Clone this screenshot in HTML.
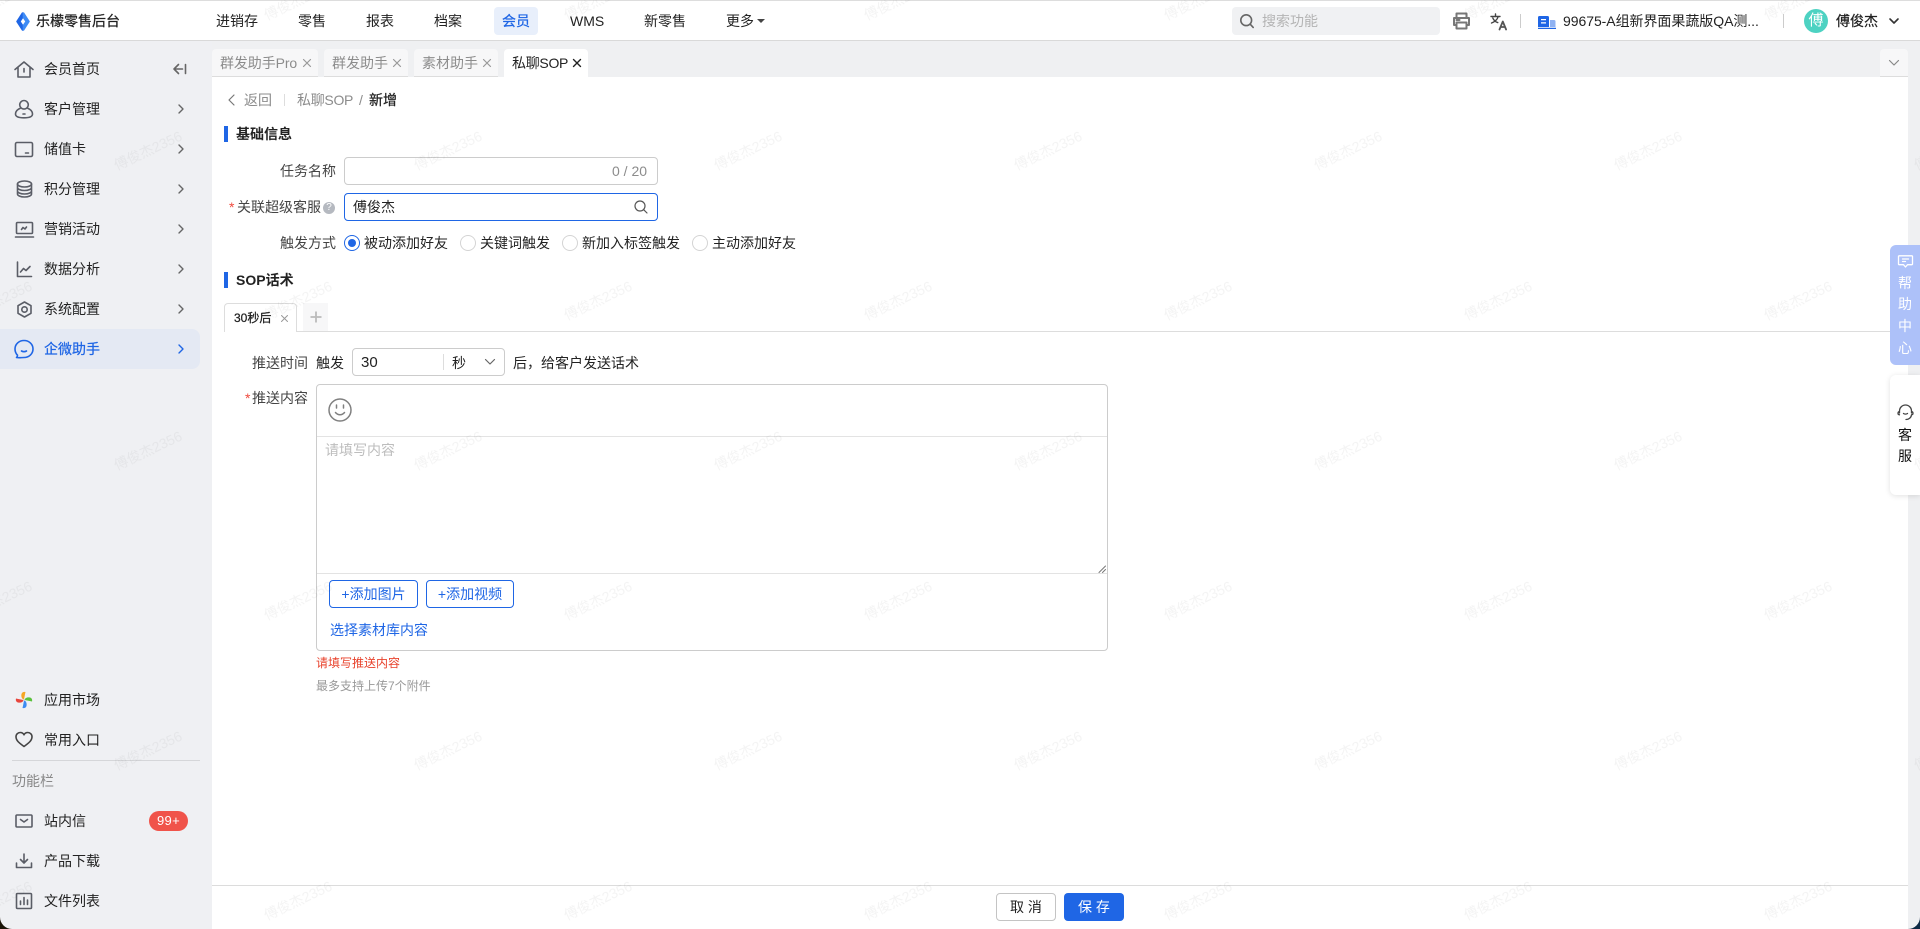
<!DOCTYPE html>
<html lang="zh-CN">
<head>
<meta charset="utf-8">
<title>私聊SOP</title>
<style>
html,body{margin:0;padding:0;width:1920px;height:929px;overflow:hidden;background:#fff}
body{position:relative;font-family:"Liberation Sans","Noto Sans CJK SC",sans-serif;font-size:14px;color:#222}
.a,.t,svg.i{position:absolute}
.t{white-space:nowrap;line-height:20px;height:20px}
.s{font-size:12px}
.g{color:#8c8c8c}
.b{color:#1f66e5}
.m{-webkit-text-stroke:.25px currentColor}
.bd{font-weight:700}
.tab{position:absolute;top:49px;height:27px;background:#f7f7f8;border-bottom:1px solid #ddd;border-radius:4px 4px 0 0}
.inp{position:absolute;box-sizing:border-box;background:#fff;border:1px solid #ccc;border-radius:4px}
.radio{position:absolute;box-sizing:border-box;width:16px;height:16px;top:235px;border:1px solid #d4d4d4;border-radius:50%;background:#fff}
.btn{position:absolute;box-sizing:border-box;top:580px;height:28px;border:1px solid #1f66e5;border-radius:4px;color:#1f66e5;line-height:26px;text-align:center;background:#fff}
svg.i{fill:none;stroke:#5a5d66;stroke-width:1.6;stroke-linecap:round;stroke-linejoin:round;overflow:visible}
svg.c{stroke:#666;stroke-width:1.4}
</style>
</head>
<body>
<!-- window corners -->
<div class="a" style="left:0;top:915px;width:14px;height:14px;background:#1b1408"></div>
<div class="a" style="left:1906px;top:915px;width:14px;height:14px;background:#0e2a45"></div>

<!-- backgrounds -->
<div class="a" style="left:0;top:0;width:1920px;height:41px;background:#fff;border-top:1px solid #ddd;box-sizing:border-box;border-bottom:1px solid #d9d9d9"></div>
<div class="a" style="left:0;top:41px;width:212px;height:888px;background:#eff0f3;border-bottom-left-radius:12px"></div>
<div class="a" style="left:212px;top:41px;width:1708px;height:36px;background:#eff0f2"></div>
<div class="a" style="left:1908px;top:41px;width:12px;height:888px;background:#eff0f2;border-bottom-right-radius:12px"></div>
<div class="a" style="left:212px;top:77px;width:1696px;height:852px;background:#fff"></div>

<!-- top bar -->
<svg class="i" style="left:16px;top:12px;stroke:none" width="14" height="19" viewBox="0 0 14 19"><path fill="#1f66e5" stroke="#1f66e5" d="M6.500 1L1 9.500 6.500 18V13.500L3.800 9.500 6.500 5.500z"/><path fill="#3f8cf5" stroke="#3f8cf5" d="M7.500 1L13 9.500 7.500 18V13.500L10.200 9.500 7.500 5.500z"/></svg>
<div class="t m" style="left:36px;top:11px">乐檬零售后台</div>
<div class="t" style="left:216px;top:11px">进销存</div>
<div class="t" style="left:298px;top:11px">零售</div>
<div class="t" style="left:366px;top:11px">报表</div>
<div class="t" style="left:434px;top:11px">档案</div>
<div class="a" style="left:494px;top:7px;width:44px;height:28px;border-radius:4px;background:#e8effb"></div>
<div class="t b m" style="left:502px;top:11px">会员</div>
<div class="t" style="left:570px;top:11px">WMS</div>
<div class="t" style="left:644px;top:11px">新零售</div>
<div class="t" style="left:726px;top:11px">更多</div>
<div class="a" style="left:757px;top:19px;width:0;height:0;border-left:4px solid transparent;border-right:4px solid transparent;border-top:4px solid #444"></div>

<div class="a" style="left:1232px;top:7px;width:208px;height:28px;border-radius:4px;background:#f0f1f3"></div>
<svg class="i" style="left:1240px;top:14px" width="14" height="14" viewBox="0 0 14 14"><circle cx="6.200" cy="6.200" r="5.400" stroke="#666"/><path d="M10.200 10.200L13.200 13.400" stroke="#666"/></svg>
<div class="t" style="left:1262px;top:11px;color:#b4b4b4">搜索功能</div>
<svg class="i" style="left:1453px;top:12px;stroke-width:2;stroke:#777" width="17" height="18" viewBox="0 0 17 18"><path d="M3.500 5.500V1.500h10v4M3.500 13H1V6h15v7h-2.500"/><path d="M3.500 10.500h10v6h-10z"/><path d="M3.500 8h3"/></svg>
<svg class="i" style="left:1490px;top:13px;stroke-width:1.400;stroke:#444" width="18" height="17" viewBox="0 0 18 17"><path d="M1 3.500h9M5.500 1v2.500M8.200 3.500C7.500 6.500 4.500 9 1.500 10M2.800 5c1 2.400 3 4 5 4.600"/><path stroke-width="1.800" stroke="#555" d="M9.500 16.500l3.300-8 3.300 8M10.700 14h4.200"/></svg>
<div class="a" style="left:1520px;top:14px;width:1px;height:14px;background:#ccc"></div>
<svg class="i" style="left:1538px;top:16px;stroke:none" width="18" height="13" viewBox="0 0 18 13"><path fill="#1f66e5" d="M0 1.500A1.500 1.500 0 011.500 0h8A1.500 1.500 0 0111 1.500V11H0z"/><path fill="#8fb2f2" d="M12 4h4a1.500 1.500 0 011.500 1.500V11H12z"/><path fill="#1f66e5" d="M0 11.700h18v1.300H0z"/><path fill="#fff" d="M3 3h5v1.300H3zM3 6.200h5v1.300H3z"/></svg>
<div class="t" style="left:1563px;top:11px;letter-spacing:-.05px">99675-A组新界面果蔬版QA测...</div>
<div class="a" style="left:1783px;top:14px;width:1px;height:14px;background:#ccc"></div>
<div class="a" style="left:1804px;top:9px;width:24px;height:24px;border-radius:50%;background:#4dd2c2;color:#fff;text-align:center;line-height:24px;font-size:15px">傅</div>
<div class="t m" style="left:1836px;top:11px">傅俊杰</div>
<svg class="i" style="left:1889px;top:18px;stroke:#333" width="10" height="7" viewBox="0 0 10 7"><path d="M1 1l4 4 4-4"/></svg>

<!-- sidebar -->
<svg class="i" style="left:14px;top:59px" width="20" height="20" viewBox="0 0 20 20"><path d="M1 10.500L10 3l9 7.500M4 8.500V18h12V8.500M10 9.500v3.500"/></svg>
<div class="t" style="left:44px;top:59px">会员首页</div>
<svg class="i" style="left:173px;top:64px;stroke:#666" width="13" height="10" viewBox="0 0 13 10"><path d="M5.500.5L1 5l4.500 4.500M1 5h8.500M12.500 .5v9"/></svg>
<svg class="i" style="left:14px;top:99px" width="20" height="20" viewBox="0 0 20 20"><circle cx="10" cy="5.800" r="4.300"/><path d="M6.300 9.200C3.500 10.300 1.500 12.300 1.500 15c0 2.500 3 3.800 8.500 3.800s8.500-1.300 8.500-3.800c0-2.700-2-4.700-4.800-5.800"/><path d="M9 15h2"/></svg>
<div class="t" style="left:44px;top:99px">客户管理</div>
<svg class="i" style="left:14px;top:139px" width="20" height="20" viewBox="0 0 20 20"><rect x="1.500" y="3.500" width="17" height="14" rx="1.500"/><path d="M11.500 14h3"/></svg>
<div class="t" style="left:44px;top:139px">储值卡</div>
<svg class="i" style="left:14px;top:179px" width="20" height="20" viewBox="0 0 20 20"><ellipse cx="10.500" cy="5" rx="7" ry="3"/><path d="M3.500 5v10c0 1.700 3.100 3 7 3s7-1.300 7-3V5M3.500 8.500c0 1.700 3.100 3 7 3s7-1.300 7-3M3.500 12c0 1.700 3.100 3 7 3s7-1.300 7-3"/></svg>
<div class="t" style="left:44px;top:179px">积分管理</div>
<svg class="i" style="left:14px;top:219px" width="20" height="20" viewBox="0 0 20 20"><rect x="2.500" y="3.500" width="16" height="11" rx="1"/><path d="M1.500 18h18M7.500 10.500l1.500-2 2 1.500 1.500-2"/></svg>
<div class="t" style="left:44px;top:219px">营销活动</div>
<svg class="i" style="left:14px;top:259px" width="20" height="20" viewBox="0 0 20 20"><path d="M3.500 3v14.500H17.500M6.500 13l3-3.500 2.500 2 4-4"/></svg>
<div class="t" style="left:44px;top:259px">数据分析</div>
<svg class="i" style="left:14px;top:299px" width="20" height="20" viewBox="0 0 20 20"><path d="M10.500 3l6.500 3.700v7.600L10.500 18 4 14.300V6.700z"/><circle cx="10.500" cy="10.500" r="2.700"/></svg>
<div class="t" style="left:44px;top:299px">系统配置</div>
<div class="a" style="left:0;top:329px;width:200px;height:40px;border-radius:0 8px 8px 0;background:#e4e9f3"></div>
<svg class="i" style="left:14px;top:339px;stroke:#1f66e5" width="20" height="20" viewBox="0 0 20 20"><path d="M3.500 16.200C1.800 14.500 1 12.400 1 10 1 5.200 5 1.500 10 1.500s9 3.700 9 8.500-4 8.500-9 8.500c-2.500 0-5 .5-7.500 0 .6-.5 1-1.200 1-2.300z"/><path d="M7.500 12c1.500.8 3.500.8 5 0"/></svg>
<div class="t b m" style="left:44px;top:339px">企微助手</div>
<svg class="i c" style="left:178px;top:104px" width="6" height="10" viewBox="0 0 6 10"><path d="M1 1l4 4-4 4"/></svg>
<svg class="i c" style="left:178px;top:144px" width="6" height="10" viewBox="0 0 6 10"><path d="M1 1l4 4-4 4"/></svg>
<svg class="i c" style="left:178px;top:184px" width="6" height="10" viewBox="0 0 6 10"><path d="M1 1l4 4-4 4"/></svg>
<svg class="i c" style="left:178px;top:224px" width="6" height="10" viewBox="0 0 6 10"><path d="M1 1l4 4-4 4"/></svg>
<svg class="i c" style="left:178px;top:264px" width="6" height="10" viewBox="0 0 6 10"><path d="M1 1l4 4-4 4"/></svg>
<svg class="i c" style="left:178px;top:304px" width="6" height="10" viewBox="0 0 6 10"><path d="M1 1l4 4-4 4"/></svg>
<svg class="i c" style="left:178px;top:344px;stroke:#1f66e5" width="6" height="10" viewBox="0 0 6 10"><path d="M1 1l4 4-4 4"/></svg>

<svg class="i" style="left:15px;top:691px;stroke:none" width="18" height="18" viewBox="0 0 18 18"><path fill="#f5a623" d="M9 8.500C6.500 8 6 5 6.500 3 7 1 9 .5 10.500 1 10 3 9.500 6 9 8.500z"/><path fill="#5ac13c" d="M9.500 9C10 6.500 13 6 15 6.500c2 .5 2.500 2.500 2 4-2 -.5-5-1-7.500-1.500z"/><path fill="#3d8bf2" d="M9 9.500c2.500.5 3 3.500 2.500 5.500-.5 2-2.500 2.500-4 2 .5-2 1-5 1.500-7.500z"/><path fill="#e8453c" d="M8.500 9C8 11.500 5 12 3 11.500 1 11 .5 9 1 7.500c2 .5 5 1 7.500 1.500z"/></svg>
<div class="t" style="left:44px;top:690px">应用市场</div>
<svg class="i" style="left:15px;top:731px;stroke:#444" width="18" height="17" viewBox="0 0 18 17"><path d="M9 15.500C5 12.500 1 10 1 5.800 1 3.200 3 1.500 5.200 1.500 6.800 1.500 8.200 2.300 9 3.800 9.800 2.300 11.200 1.500 12.800 1.500 15 1.500 17 3.200 17 5.800 17 10 13 12.500 9 15.500z"/></svg>
<div class="t" style="left:44px;top:730px">常用入口</div>
<div class="a" style="left:12px;top:760px;width:188px;height:1px;background:#d5d6d9"></div>
<div class="t" style="left:12px;top:771px;color:#888">功能栏</div>
<svg class="i" style="left:15px;top:813px" width="18" height="16" viewBox="0 0 18 16"><rect x="1" y="2" width="16" height="12" rx="1"/><path d="M5.500 6.500L9 9l3.500-2.500"/></svg>
<div class="t" style="left:44px;top:811px">站内信</div>
<div class="a" style="left:149px;top:811px;width:39px;height:20px;border-radius:10px;background:#f0534a;color:#fff;text-align:center;line-height:20px;font-size:13px;letter-spacing:.3px">99+</div>
<svg class="i" style="left:15px;top:852px" width="18" height="18" viewBox="0 0 18 18"><path d="M9 2v8.500M5.500 7.500L9 11l3.500-3.500M1.500 11v4.500h15V11"/></svg>
<div class="t" style="left:44px;top:851px">产品下载</div>
<svg class="i" style="left:15px;top:892px" width="18" height="18" viewBox="0 0 18 18"><rect x="1.500" y="1.500" width="15" height="15" rx="1"/><path d="M5.500 12.500V9M9 12.500V5.500M12.500 12.500V8"/></svg>
<div class="t" style="left:44px;top:891px">文件列表</div>

<!-- tabs -->
<div class="tab" style="left:212px;width:106px"></div>
<div class="t g" style="left:220px;top:53px;letter-spacing:-.1px">群发助手Pro</div>
<svg class="i" style="left:303px;top:59px;stroke:#999;stroke-width:1.200" width="8" height="8" viewBox="0 0 8 8"><path d="M.5.500l7 7M7.500.500l-7 7"/></svg>
<div class="tab" style="left:324px;width:84px"></div>
<div class="t g" style="left:332px;top:53px">群发助手</div>
<svg class="i" style="left:393px;top:59px;stroke:#999;stroke-width:1.200" width="8" height="8" viewBox="0 0 8 8"><path d="M.5.500l7 7M7.500.500l-7 7"/></svg>
<div class="tab" style="left:414px;width:84px"></div>
<div class="t g" style="left:422px;top:53px">素材助手</div>
<svg class="i" style="left:483px;top:59px;stroke:#999;stroke-width:1.200" width="8" height="8" viewBox="0 0 8 8"><path d="M.5.500l7 7M7.500.500l-7 7"/></svg>
<div class="tab" style="left:504px;width:84px;height:28px;background:#fff;border:0"></div>
<div class="t" style="left:512px;top:53px;letter-spacing:-.3px">私聊SOP</div>
<svg class="i" style="left:573px;top:59px;stroke:#222;stroke-width:1.400" width="8" height="8" viewBox="0 0 8 8"><path d="M.5.500l7 7M7.500.500l-7 7"/></svg>
<div class="tab" style="left:1880px;width:28px"></div>
<svg class="i" style="left:1889px;top:60px;stroke:#888;stroke-width:1.200" width="10" height="6" viewBox="0 0 10 6"><path d="M.5.500L5 5 9.500.500"/></svg>

<!-- breadcrumb -->
<svg class="i" style="left:228px;top:94px;stroke:#777;stroke-width:1.200" width="7" height="12" viewBox="0 0 7 12"><path d="M6 1L1 6l5 5"/></svg>
<div class="t g" style="left:244px;top:90px">返回</div>
<div class="a" style="left:284px;top:94px;width:1px;height:12px;background:#ddd"></div>
<div class="t g" style="left:297px;top:90px;letter-spacing:-.3px">私聊SOP</div>
<div class="t g" style="left:359px;top:90px">/</div>
<div class="t m" style="left:369px;top:90px">新增</div>

<!-- base info -->
<div class="a" style="left:224px;top:126px;width:4px;height:16px;background:#1f66e5"></div>
<div class="t bd" style="left:236px;top:124px">基础信息</div>

<div class="t" style="left:280px;top:161px;color:#444">任务名称</div>
<div class="inp" style="left:344px;top:157px;width:314px;height:28px"></div>
<div class="t g" style="left:612px;top:161px">0 / 20</div>

<div class="t" style="left:229px;top:197px;color:#f04a3e">*</div>
<div class="t" style="left:237px;top:197px;color:#444">关联超级客服</div>
<div class="a" style="left:323px;top:202px;width:12px;height:12px;border-radius:50%;background:#b5b9c0;color:#fff;font-size:10px;line-height:12px;text-align:center">?</div>
<div class="inp" style="left:344px;top:193px;width:314px;height:28px;border-color:#1f66e5"></div>
<div class="t" style="left:353px;top:197px">傅俊杰</div>
<svg class="i" style="left:634px;top:200px;stroke:#555;stroke-width:1.200" width="14" height="14" viewBox="0 0 14 14"><circle cx="6" cy="6" r="5"/><path d="M9.800 9.800L13 13"/></svg>

<div class="t" style="left:280px;top:233px;color:#444">触发方式</div>
<div class="radio" style="left:344px;border:1px solid #1f66e5"></div>
<div class="a" style="left:348px;top:239px;width:8px;height:8px;border-radius:50%;background:#1f66e5"></div>
<div class="t" style="left:364px;top:233px">被动添加好友</div>
<div class="radio" style="left:460px"></div>
<div class="t" style="left:480px;top:233px">关键词触发</div>
<div class="radio" style="left:562px"></div>
<div class="t" style="left:582px;top:233px">新加入标签触发</div>
<div class="radio" style="left:692px"></div>
<div class="t" style="left:712px;top:233px">主动添加好友</div>

<!-- SOP -->
<div class="a" style="left:224px;top:272px;width:4px;height:16px;background:#1f66e5"></div>
<div class="t bd" style="left:236px;top:270px">SOP话术</div>

<div class="a" style="left:224px;top:331px;width:1684px;height:1px;background:#ddd"></div>
<div class="a" style="left:224px;top:303px;width:73px;height:29px;box-sizing:border-box;background:#fff;border:1px solid #ddd;border-bottom:0;border-radius:4px 4px 0 0"></div>
<div class="t s m" style="left:234px;top:308px">30秒后</div>
<svg class="i" style="left:281px;top:315px;stroke:#999;stroke-width:1" width="7" height="7" viewBox="0 0 7 7"><path d="M.5.500l6 6M6.500.500l-6 6"/></svg>
<div class="a" style="left:303px;top:303px;width:25px;height:28px;background:#f7f7f8"></div>
<svg class="i" style="left:310px;top:311px;stroke:#bbb;stroke-width:1.800;stroke-linecap:butt" width="12" height="12" viewBox="0 0 12 12"><path d="M6 .5v11M.5 6h11"/></svg>

<div class="t" style="left:252px;top:353px;color:#444">推送时间</div>
<div class="t" style="left:316px;top:353px">触发</div>
<div class="inp" style="left:352px;top:348px;width:153px;height:28px"></div>
<div class="t" style="left:361px;top:353px;font-size:15px">30</div>
<div class="a" style="left:443px;top:354px;width:1px;height:16px;background:#ddd"></div>
<div class="t" style="left:452px;top:353px">秒</div>
<svg class="i" style="left:485px;top:359px;stroke:#666;stroke-width:1.200" width="10" height="6" viewBox="0 0 10 6"><path d="M.5.500L5 5 9.500.500"/></svg>
<div class="t" style="left:513px;top:353px">后，给客户发送话术</div>

<div class="t" style="left:245px;top:388px;color:#f04a3e">*</div>
<div class="t" style="left:252px;top:388px;color:#444">推送内容</div>
<div class="inp" style="left:316px;top:384px;width:792px;height:267px"></div>
<svg class="i" style="left:328px;top:398px;stroke:#808080;stroke-width:1.500" width="24" height="24" viewBox="0 0 24 24"><circle cx="12" cy="12" r="11"/><path d="M8.500 7v3M15.500 7v3M7.500 14.500c2.500 3 6.500 3 9 0"/></svg>
<div class="a" style="left:317px;top:436px;width:790px;height:1px;background:#e3e3e3"></div>
<div class="t" style="left:325px;top:440px;color:#bdbdbd">请填写内容</div>
<svg class="i" style="left:1098px;top:565px;stroke:#777;stroke-width:1" width="8" height="8" viewBox="0 0 8 8"><path d="M1 7.500L7.500 1M4.500 7.500L7.500 4.500"/></svg>
<div class="a" style="left:317px;top:573px;width:790px;height:1px;background:#e3e3e3"></div>
<div class="btn" style="left:329px;width:89px">+添加图片</div>
<div class="btn" style="left:426px;width:88px">+添加视频</div>
<div class="t b" style="left:330px;top:620px">选择素材库内容</div>
<div class="t s" style="left:316px;top:653px;color:#e8432d">请填写推送内容</div>
<div class="t s" style="left:316px;top:676px;color:#999">最多支持上传7个附件</div>

<!-- footer -->
<div class="a" style="left:212px;top:885px;width:1696px;height:1px;background:#dcdcdc"></div>
<div class="a" style="left:996px;top:893px;width:60px;height:28px;box-sizing:border-box;border:1px solid #c4c4c4;border-radius:4px;background:#fff;text-align:center;line-height:26px">取 消</div>
<div class="a" style="left:1064px;top:893px;width:60px;height:28px;border-radius:4px;background:#1f66e5;color:#fff;text-align:center;line-height:28px">保 存</div>

<!-- right floats -->
<div class="a" style="left:1890px;top:245px;width:30px;height:120px;border-radius:6px 0 0 6px;background:#adc1f9"></div>
<svg class="i" style="left:1898px;top:255px;stroke:#fff;stroke-width:1.300" width="15" height="13" viewBox="0 0 15 13"><path d="M1.200.8h12.600a.7.7 0 01.7.700v7.500a.7.7 0 01-.7.700H9.500L7.500 12l-2-2.300H1.200a.7.700 0 01-.7-.7V1.500a.7.700 0 01.7-.7zM4.500 4h6M4.500 6.500h3"/></svg>
<div class="t" style="left:1898px;top:273px;color:#fff">帮</div>
<div class="t" style="left:1898px;top:294px;color:#fff">助</div>
<div class="t" style="left:1898px;top:316px;color:#fff">中</div>
<div class="t" style="left:1898px;top:338px;color:#fff">心</div>
<div class="a" style="left:1890px;top:375px;width:30px;height:120px;border-radius:6px 0 0 6px;background:#fff;box-shadow:0 1px 6px rgba(0,0,0,.12)"></div>
<svg class="i" style="left:1897px;top:404px;stroke:#444;stroke-width:1.300" width="17" height="17" viewBox="0 0 17 17"><path d="M2.500 9V7a6 6 0 0112 0v2M2.500 7.500C1.300 7.700 1 8.500 1 9.300s.5 1.500 1.500 1.500M14.500 7.500c1.200.2 1.500 1 1.500 1.800s-.5 1.500-1.500 1.500M14.500 11c-.5 3-3 4.500-5.500 4.500M6.500 9.500c1 .8 3 .8 4 0"/></svg>
<div class="t" style="left:1898px;top:425px;color:#111">客</div>
<div class="t" style="left:1898px;top:446px;color:#111">服</div>

<!-- watermark -->
<svg class="a" style="left:0;top:0;pointer-events:none" width="1920" height="929">
<defs>
<pattern id="wm" x="0" y="0" width="300" height="300" patternUnits="userSpaceOnUse">
<g fill="#000" fill-opacity=".045" font-size="14" font-family="Liberation Sans,Noto Sans CJK SC,sans-serif" text-anchor="middle">
<text transform="translate(150 155) rotate(-25)">傅俊杰2356</text>
<text transform="translate(0 5) rotate(-25)">傅俊杰2356</text>
<text transform="translate(300 5) rotate(-25)">傅俊杰2356</text>
<text transform="translate(0 305) rotate(-25)">傅俊杰2356</text>
<text transform="translate(300 305) rotate(-25)">傅俊杰2356</text>
</g>
</pattern>
</defs>
<rect width="1920" height="929" fill="url(#wm)"/>
</svg>
</body>
</html>
